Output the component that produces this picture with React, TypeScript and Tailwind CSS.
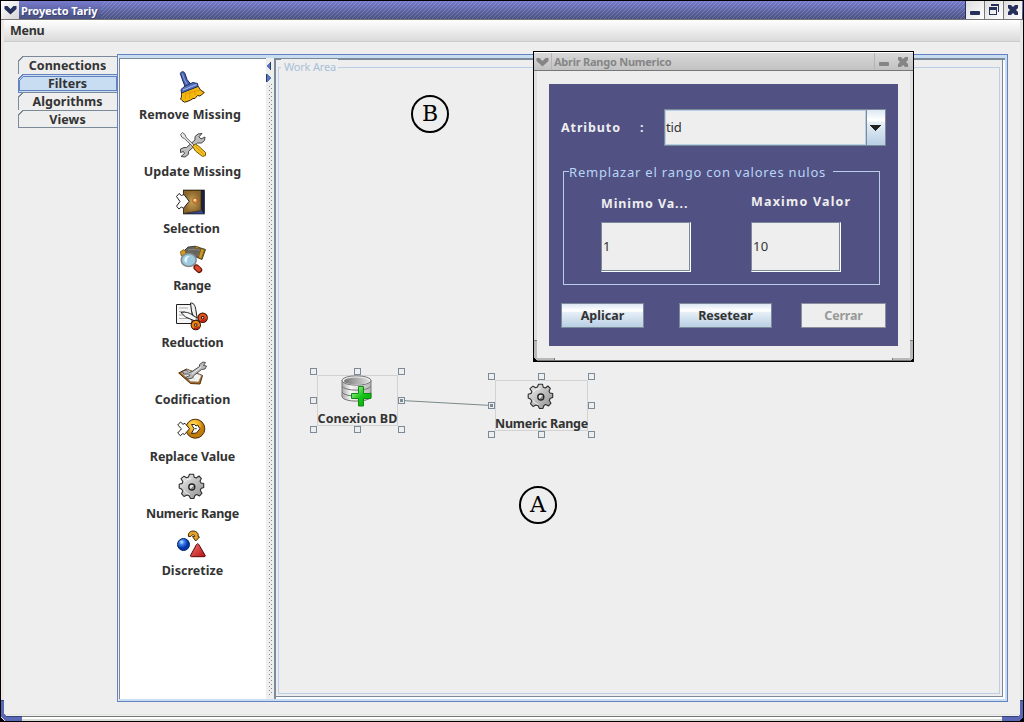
import type { ReactNode } from 'react';

function IconFrame({ children }: { children: ReactNode }) {
  return (
    <svg width="32" height="32" viewBox="0 0 32 32" className="block shrink-0 overflow-visible" strokeLinejoin="round">
      {children}
    </svg>
  );
}

function BrushIcon() {
  return (
    <IconFrame>
      <path d="M4.3 1.5C5-.8 8-.9 8.9 1.300L11 7.500 14.800 12.200 9.300 15 6.500 8Z" fill="#4763b4" stroke="#1c2856" />
      <path d="M6.300 1.500 8.500 8 11.500 13" fill="none" stroke="#8fa6e2" />
      <path d="M5.500 20.500C5.500 23 6 25 4.500 27L6 28.500 8.500 30.200 11 29.500 14.500 28.200 17 26.500 19 26.500 21.500 23.500 24 24 28.300 20.500 24.500 18 22 14Z" fill="#f5b80e" stroke="#3a2805" />
      <path d="M10 21 9 27M14 19 13.500 26M18 18 19.500 23M9 22 24 18" stroke="#d8940a" strokeWidth=".8" fill="none" />
      <path d="M5 17.500 9 14 17 10.500 21.500 11.500 22 14.500 5.500 21Z" fill="#5570bd" stroke="#1f2c60" />
      <path d="M7 18 20.500 12.500" stroke="#a9bbe8" fill="none" />
    </IconFrame>
  );
}

function ToolsIcon() {
  return (
    <IconFrame>
      <path d="M4.500 20 8 18.500 10.500 18.500 19 11 19 7.500 22 5 26 4.500 23 7.800 25 10 29 8 28.500 11.500 25.500 14 21.500 14 12.500 22.500 12.300 25.500 9 28 5 27.500 8.500 24.500 7.500 22.500 4.500 23.500Z" fill="#bdbdbd" stroke="#444" />
      <path d="M4.500 5.500 6.500 3.600 9 5.500 10 8.300 18 16 16.600 17.500 8.300 9.500 6 8.500Z" fill="#e6e6e6" stroke="#444" strokeWidth=".8" />
      <path d="M16.500 17.500 19.300 15 22.500 17 29.500 23.500V26.500L26.500 27.500 19.500 22Z" fill="#f4c022" stroke="#76560a" />
      <path d="M19.500 17.500 27.500 25" stroke="#d09a10" />
    </IconFrame>
  );
}

function DoorIcon() {
  return (
    <IconFrame>
      <defs>
        <radialGradient id="door-wood"><stop stopColor="#c8a055" /><stop offset="1" stopColor="#8a652b" /></radialGradient>
      </defs>
      <path d="M7 3.700H28.700V28.300H7Z" fill="#111019" />
      <path d="M9 27.500 25 23 28 27.700Z" fill="#35478d" />
      <path d="M25.500 5V23L28.500 27V5Z" fill="#1b2143" />
      <path d="M7.500 4.500H25V24.500L7.500 27.500Z" fill="url(#door-wood)" stroke="#49330f" strokeWidth=".8" />
      <circle cx="19.300" cy="14.700" r="2.700" fill="#e08a3c" stroke="#80410f" strokeWidth=".5" />
      <circle cx="18.700" cy="14" r="1.200" fill="#ffe3c0" />
      <path d="M.5 10.500 3 7.500 5.500 9.500 8 8.500 13.200 15.300 7.500 22.200 5.300 21 3 23 .5 20.200 4 15.500Z" fill="#fff" stroke="#222" />
    </IconFrame>
  );
}

function MagnifierIcon() {
  return (
    <IconFrame>
      <path d="M8 8 12 4 19 3.200 29.500 6.500 27.500 12 26 16.500 20 14 8 12Z" fill="#66645f" stroke="#292620" strokeWidth=".8" />
      <path d="M12 7 21 6 25 8 22 13" fill="none" stroke="#8d8a83" />
      <path d="M25 5.500 28.500 6.500 25.500 16 22.500 14.500ZM4.500 8.500 8 6.500 10 9 9 14 5 12.500ZM20 3.500 23 4.500 22 6 19 5Z" fill="#cf9a1e" stroke="#6b4b0a" strokeWidth=".7" />
      <path d="M18 22 22 26" stroke="#777" strokeWidth="2.500" />
      <path d="M20.500 24.500 23.200 27" stroke="#64150a" strokeWidth="6" strokeLinecap="round" />
      <path d="M20.700 24.500 23 26.700" stroke="#df4828" strokeWidth="4" strokeLinecap="round" />
      <ellipse cx="12.700" cy="17" rx="7.500" ry="6.500" fill="#9ccbe1" stroke="#888" strokeWidth="1.600" />
      <path d="M8.500 18C8 14.500 10.500 12.500 14 13 11 14.500 10.500 17 11 20Z" fill="#e8f7fb" />
    </IconFrame>
  );
}

function ScissorsIcon() {
  return (
    <IconFrame>
      <path d="M.5 4.500H16V23.500H.5Z" fill="#f6f6f6" stroke="#222" />
      <path d="M3 8H12M3 11.500H9M3 15H11M3 18.500H13" stroke="#aaa" />
      <path d="M14.500 3C18.500 2.500 19.500 7 20 11L21.500 20 18.500 20 15.500 11Z" fill="#eee" stroke="#222" />
      <path d="M5 12.500C10 11.500 14 13 17 15.500L24 19.500 19 21 9.500 17Z" fill="#f8f8f8" stroke="#222" />
      <circle cx="26.700" cy="17.700" r="3" fill="none" stroke="#321006" strokeWidth="4.400" />
      <circle cx="26.700" cy="17.700" r="3" fill="none" stroke="#e7521a" strokeWidth="2.500" />
      <circle cx="19.800" cy="25" r="3" fill="none" stroke="#321006" strokeWidth="4.400" />
      <circle cx="19.800" cy="25" r="3" fill="none" stroke="#ed8312" strokeWidth="2.500" />
      <path d="M18 28A3.500 3.500 0 0 0 22.800 26.500M25 20.500A3.500 3.500 0 0 0 29.800 19" fill="none" stroke="#c61710" strokeWidth="1.500" />
      <circle cx="21" cy="19" r="1" fill="#fff" stroke="#333" strokeWidth=".6" />
    </IconFrame>
  );
}

function NoteWrenchIcon() {
  return (
    <IconFrame>
      <path d="M2.700 16 10.500 12 26.500 18.500 24 27 14.500 26.500Z" fill="#a7651c" stroke="#573009" />
      <path d="M5.500 16 11 12.500 25.500 18.500 22.500 25 14.500 24.500Z" fill="#f3f2ef" stroke="#8a8a86" strokeWidth=".6" />
      <path d="M9 17 14 22M12 16 19 22.500" stroke="#c7c7c3" />
      <path d="M6.500 14 10.500 13 13 15.500 16 14.500 23.500 9.500 23.500 7.500 27 5 29.500 5.500 27.500 8.500 30.500 9 29 12 25.500 12.500 17.500 18.800 16.500 21 12 22 9.500 20.500 14 18.500 12.500 17 7.500 17Z" fill="#b9bab9" stroke="#444" strokeWidth=".9" />
      <path d="M16 17 25 10" stroke="#eee" />
    </IconFrame>
  );
}

function ReplaceIcon() {
  return (
    <IconFrame>
      <defs>
        <radialGradient id="gold-disc" cx=".4" cy=".3"><stop stopColor="#ffe16b" /><stop offset=".6" stopColor="#f3b224" /><stop offset="1" stopColor="#c07b0c" /></radialGradient>
      </defs>
      <g transform="translate(0 -6)">
        <circle cx="19.300" cy="20.700" r="9.500" fill="url(#gold-disc)" stroke="#4b2d05" />
        <path d="M1.700 17 4.500 14 7 16.300 9 15.300 13.500 20.800 8.500 26.500 6.700 25.500 4.500 27.700 1.700 25 5.500 20.800Z" fill="#fff" stroke="#222" />
        <path d="M15.500 16.500 18.500 16.500 20 18 21.500 17 24 20.700 20.500 25 15.500 25.500 18 20.700Z" fill="#fff" stroke="#2c2410" />
        <path d="M18.700 20.700H20.700" stroke="#333" />
      </g>
    </IconFrame>
  );
}

function GearIcon() {
  return (
    <IconFrame>
      <defs>
        <linearGradient id="gear-metal" x2="1" y2="1"><stop stopColor="#f0f0f0" /><stop offset="1" stopColor="#8d8d8d" /></linearGradient>
      </defs>
      <path d="M13.500 3.200H17.500L18.200 6.200 20.300 7 22.900 5 25.300 7.400 24 10.200 25 12 27.700 12.500V16.500L25 17.600 24.300 19.500 26 22.200 23.600 25 20.700 23.500 19 24.500 17.800 27.500H14.500L13 24.800 11 24 8 25.500 5.500 22.700 6.800 20 5.500 18 3.200 17V13.200L6.200 12.400 6.800 10.500 5 7.700 8 5.200 10.600 6.700 12.400 6Z" fill="url(#gear-metal)" stroke="#2d2d2d" strokeWidth="1.100" />
      <path d="M8 11 11 8.500 15 7.500M8 19 10 22 13.500 23.500" stroke="#fff" fill="none" opacity=".7" />
      <circle cx="15.800" cy="16" r="3" fill="#e5e5e5" stroke="#222" strokeWidth="1.400" />
      <path d="M14.500 18 17.800 14.500V17L16 18.200Z" fill="#777" />
    </IconFrame>
  );
}

function ShapesIcon() {
  return (
    <IconFrame>
      <defs>
        <radialGradient id="sphere" cx=".35" cy=".3"><stop stopColor="#d9ecff" /><stop offset=".4" stopColor="#3f88ef" /><stop offset="1" stopColor="#0434ab" /></radialGradient>
        <linearGradient id="cone" x2="1" y2="1"><stop stopColor="#ee7770" /><stop offset="1" stopColor="#b90f14" /></linearGradient>
      </defs>
      <path d="M12.500 8.500C11.500 4 16 2 19.500 3.500 22 4.500 22.500 6.500 22 8.500L23.500 9 19.700 13 16.500 8.500 18.800 8.300C18.500 6.500 16.500 6 14.700 8.500Z" fill="#e6a227" stroke="#3d2707" />
      <circle cx="7.500" cy="16.500" r="6" fill="url(#sphere)" stroke="#06245f" />
      <path d="M20.500 16.500Q21.500 14.800 22.800 16.500L29.200 27.500Q29.500 28.700 28.200 28.700H15.500Q14 28.500 14.600 27.300Z" fill="url(#cone)" stroke="#5a0708" />
    </IconFrame>
  );
}

function DatabaseIcon() {
  return (
    <svg width="32" height="32" viewBox="0 0 32 32" className="-mt-px block overflow-visible">
      <defs>
        <linearGradient id="db-side"><stop stopColor="#aaa" /><stop offset=".3" stopColor="#f7f7f7" /><stop offset="1" stopColor="#b5b5b5" /></linearGradient>
        <linearGradient id="db-top"><stop stopColor="#777" /><stop offset="1" stopColor="#ddd" /></linearGradient>
        <linearGradient id="plus" x2="1" y2="1"><stop stopColor="#c9f5b9" /><stop offset=".5" stopColor="#16c716" /><stop offset="1" stopColor="#08a508" /></linearGradient>
      </defs>
      <path d="M1 5V22C3 27.500 28 27.500 30 22V5Z" fill="url(#db-side)" stroke="#777" />
      <path d="M1 11C3 16.500 28 16.500 30 11M1 17C3 22.500 28 22.500 30 17" fill="none" stroke="#777" />
      <ellipse cx="15.500" cy="5.500" rx="14.500" ry="4.700" fill="#eee" stroke="#777" />
      <ellipse cx="15.500" cy="6" rx="12.500" ry="3.600" fill="url(#db-top)" />
      <path d="M17.500 11.500H22.500V18.500H30V23.500H22.500V31H17.500V23.500H10.500V18.500H17.500Z" fill="url(#plus)" stroke="#118c11" />
    </svg>
  );
}

function Chevron() {
  return (
    <svg width="13" height="10" viewBox="0 0 13 10" className="block">
      <path d="M.5 1H3.500L6.500 4 9.500 1H12.500V4L6.500 9.500 .5 4Z" fill="currentColor" />
    </svg>
  );
}

function Minimize() {
  return <span className="block h-1 w-[10px] rounded-[1px] bg-current" />;
}

function Close() {
  return (
    <svg width="12" height="12" viewBox="0 0 12 12">
      <path d="M1 1H4L6 3 8 1H11V4L9 6 11 8V11H8L6 9 4 11H1V8L3 6 1 4Z" fill="currentColor" />
    </svg>
  );
}

function Restore() {
  return (
    <svg width="12" height="12" viewBox="0 0 12 12" shapeRendering="crispEdges">
      <path d="M3 0H11V8H10V2H3ZM1 3H9V11H1ZM2 6V10H8V6Z" fill="currentColor" fillRule="evenodd" />
    </svg>
  );
}

const tabs = [
  { name: 'Connections', tracking: 'tracking-[0px]' },
  { name: 'Filters', tracking: 'tracking-[0px]' },
  { name: 'Algorithms', tracking: 'tracking-[0.05px]' },
  { name: 'Views', tracking: 'tracking-[0.1px]' },
];

function Tabs() {
  return (
    <nav className="mt-[14px] ml-[14px] flex h-[72px] w-[99px] shrink-0 flex-col">
      {tabs.map(({ name, tracking }, i) => {
        const active = i === 1;
        return (
          <div key={name} className="relative flex h-[18px] items-center justify-center">
            <svg width="99" height="19" className="absolute top-0 left-0 overflow-visible" shapeRendering="crispEdges">
              {active ? (
                <>
                  <path d="M.5 18.500V5L5 .5H99V18H.5Z" fill="#c8ddf2" stroke="#6382bf" />
                  <path d="M1.500 16.500V6.500L5.500 2.500H98.500V16.500Z" fill="#c8ddf2" stroke="#6382bf" />
                </>
              ) : (
                <path d="M.5 18V5L5 .5H99" fill="none" stroke="#7a8a99" />
              )}
              {i === 3 && <path d="M0 17.500H99" stroke="#7a8a99" />}
            </svg>
            <span className={`relative pt-[2px] leading-[18px] ${tracking}`}>{name}</span>
          </div>
        );
      })}
    </nav>
  );
}

const filters = [
  { name: 'Remove Missing', Icon: BrushIcon, label: '-ml-[4px] tracking-[0.07px]' },
  { name: 'Update Missing', Icon: ToolsIcon, label: 'ml-px tracking-[0.05px]' },
  { name: 'Selection', Icon: DoorIcon, label: '-ml-px tracking-[-0.05px]' },
  { name: 'Range', Icon: MagnifierIcon, label: 'tracking-[-0.3px]' },
  { name: 'Reduction', Icon: ScissorsIcon, label: 'ml-px tracking-[-0.15px]' },
  { name: 'Codification', Icon: NoteWrenchIcon, label: 'ml-px tracking-[0.05px]' },
  { name: 'Replace Value', Icon: ReplaceIcon, label: 'ml-px tracking-[-0.1px]' },
  { name: 'Numeric Range', Icon: GearIcon, label: 'ml-px tracking-[-0.25px]' },
  { name: 'Discretize', Icon: ShapesIcon, label: 'ml-px tracking-[0.05px]' },
];

function FilterList() {
  return (
    <div className="flex w-[147px] shrink-0 flex-col items-center border-t border-l border-[#7a8a99] bg-white pt-[13px]">
      {filters.map(({ name, Icon, label }) => (
        <div key={name} className="flex h-[57px] w-full flex-col items-center pr-[2px]">
          <Icon />
          <span className={`mt-[3px] leading-4 whitespace-nowrap ${label}`}>{name}</span>
        </div>
      ))}
    </div>
  );
}

function Divider() {
  return (
    <svg width="8" height="641" className="block shrink-0" shapeRendering="crispEdges">
      <defs>
        <pattern id="bumps" width="4" height="4" patternUnits="userSpaceOnUse" x="3" y="0">
          <path d="M0 0H1V1H0ZM2 2H3V3H2Z" fill="#7a8a99" />
        </pattern>
      </defs>
      <rect width="8" height="641" fill="#eee" />
      <rect x="3" y="26" width="4" height="611" fill="url(#bumps)" />
      <path d="M4 4V12L0 8Z" fill="#5577c0" />
      <path d="M4.500 4V12" stroke="#333a55" />
      <path d="M1 16V24L5 20Z" fill="#5577c0" />
      <path d="M.5 16V24" stroke="#333a55" />
    </svg>
  );
}

function Handle({ className, linked }: { className: string; linked?: boolean }) {
  return (
    <span className={`absolute flex size-[7px] items-center justify-center border border-[#7a8a99] bg-[#eee] ${className}`}>
      {linked && <span className="size-[3px] bg-[#7a8a99]" />}
    </span>
  );
}

function Node({ className, children, linked }: { className: string; children: ReactNode; linked: 'left' | 'right' }) {
  return (
    <div className={`absolute h-[65px] px-[7px] pt-[7px] ${className}`}>
      <Handle className="top-0 left-0" />
      <Handle className="top-0 left-[calc(50%-3.500px)]" />
      <Handle className="top-0 right-0" />
      <Handle className="top-[29px] left-0" linked={linked === 'left'} />
      <Handle className="top-[29px] right-0" linked={linked === 'right'} />
      <Handle className="bottom-0 left-0" />
      <Handle className="bottom-0 left-[calc(50%-3.500px)]" />
      <Handle className="right-0 bottom-0" />
      <div className="flex h-[51px] flex-col items-center border border-[#d2d2d2]">{children}</div>
    </div>
  );
}

function Marker({ className, children }: { className: string; children: ReactNode }) {
  return (
    <div className={`absolute flex size-[38px] items-center justify-center rounded-full border-2 border-black font-['DejaVu_Serif',serif] text-[22px] leading-none font-normal text-black ${className}`}>
      {children}
    </div>
  );
}

function WorkArea() {
  return (
    <section className="relative min-w-0 flex-1 border-t-2 border-l-2 border-[#7a8a99] bg-[#eee]">
      <div className="h-full border-r-2 border-b-2 border-white">
        <div className="h-full border-r border-b border-[#7a8a99] pt-[7px] pr-[2px] pb-[2px] pl-[2px]">
          <div className="h-full border border-[#b8cfe5]">
            <h2 className="-mt-[9px] ml-[2px] w-[57px] bg-[#eee] pl-[3px] text-[11px] leading-4 font-normal tracking-[-0.2px] whitespace-nowrap text-[#a9c0d8]">Work Area</h2>
          </div>
        </div>
      </div>
      <svg width="400" height="200" className="absolute top-[300px] left-[100px]">
        <path d="M25.500 40.500 115.500 45.500" stroke="#7a8a8a" />
      </svg>
      <Node className="top-[308px] left-[34px] w-[95px]" linked="right">
        <div className="pr-[2px]"><DatabaseIcon /></div>
        <span className="mt-[4px] leading-4 tracking-[0.1px] whitespace-nowrap">Conexion BD</span>
      </Node>
      <Node className="top-[313px] left-[212px] w-[107px]" linked="left">
        <div className="pr-[2px]"><GearIcon /></div>
        <span className="mt-[3px] leading-4 tracking-[-0.250px] whitespace-nowrap">Numeric Range</span>
      </Node>
      <Marker className="top-[35px] left-[135px]">B</Marker>
      <Marker className="top-[426px] left-[243px]">A</Marker>
    </section>
  );
}

function ValueField({ label, value, labelClass }: { label: string; value: string; labelClass: string }) {
  return (
    <label className="flex w-[102px] flex-col">
      <span className={`h-5 leading-5 whitespace-nowrap text-[#eee] ${labelClass}`}>{label}</span>
      <span className="flex h-[50px] w-[90px] items-center border border-[#7a8a99] border-r-white border-b-white bg-[#eee] font-normal">
        <span className="flex size-full items-center border-r border-b border-[#7a8a99] pb-[2px] pl-[1px] text-[13px] tracking-[0.2px]">{value}</span>
      </span>
    </label>
  );
}

const metal = 'bg-[linear-gradient(#dde8f3_0%,#fff_28%,#fff_32%,#e8f0f7_34%,#b8cfe5_100%)]';

function RangeDialog() {
  return (
    <div className="absolute top-[50px] left-[532px] flex h-[311px] w-[381px] flex-col border border-black bg-[#eee]">
      <header className="flex h-[19px] shrink-0 items-center border-t border-b border-t-white border-b-[#777] bg-[linear-gradient(#d8d8d8,#c2c2c2)] text-[#858585]">
        <span className="flex h-full w-[18px] items-center justify-center border-r border-[#b5b5b5]"><Chevron /></span>
        <span className="ml-[2px] text-[11px] leading-4 tracking-[-0.25px]">Abrir Rango Numerico</span>
        <span className="ml-auto flex h-full w-[39px] items-center gap-[8px] border-l border-[#b5b5b5] pl-1">
          <span className="mt-[5px]"><Minimize /></span>
          <Close />
        </span>
      </header>
      <div className="flex min-h-0 flex-1 flex-col border-x-[3px] border-b border-[#e0e0e0] border-b-[#777] px-3 pt-[13px]">
        <div className="flex h-[262px] w-[349px] flex-col bg-[#525184] px-3 pt-[25px]">
          <div className="flex h-[37px] w-[325px] items-center text-[#eee]">
            <span className="w-[79px] tracking-[0.9px]">Atributo</span>
            <span className="w-6">:</span>
            <div className="flex h-[37px] w-[222px] border border-[#7a8a99] bg-[#eee] text-[#333]">
              <span className="flex flex-1 items-center border border-[#b8cfe5] pb-[2px] text-[13px] font-normal tracking-[-0.1px]">tid</span>
              <span className={`flex w-[19px] items-center justify-center border-l border-[#7a8a99] pr-px ${metal}`}>
                <svg width="11" height="6" shapeRendering="crispEdges"><path d="M0 0H11L5.500 6Z" fill="#222" /></svg>
              </span>
            </div>
          </div>
          <fieldset className="relative mt-[25px] ml-[2px] flex h-[114px] w-[317px] gap-12 border border-[#b8cfe5] pt-[20px] pl-[37px]">
            <span className="absolute -top-[9px] left-[5px] w-[264px] bg-[#525184] text-[13px] leading-[18px] font-normal tracking-[0.8px] whitespace-nowrap text-[#b8d6f5]">Remplazar el rango con valores nulos</span>
            <ValueField label="Minimo Va..." value="1" labelClass="mt-[2px] mb-[8px] tracking-[0.9px]" />
            <ValueField label="Maximo Valor" value="10" labelClass="mb-[10px] tracking-[1.2px]" />
          </fieldset>
          <div className="mt-[18px] flex h-[25px] w-[325px] justify-between">
            <button className={`w-[83px] border border-[#7a8a99] ${metal}`}>Aplicar</button>
            <button className={`mr-[-6px] w-[93px] border border-[#7a8a99] tracking-[-0.1px] ${metal}`}>Resetear</button>
            <button className="w-[85px] border border-[#8d8d9b] bg-[#eee] tracking-[-0.2px] text-[#999]">Cerrar</button>
          </div>
        </div>
      </div>
      <svg width="379" height="22" className="pointer-events-none absolute bottom-0 left-0" shapeRendering="crispEdges">
        <path d="M0 2H3V19H21V21H2L0 19ZM379 2H376V19H358V21H377L379 19Z" fill="#b9b9b9" />
        <path d="M0 1.500H3M376 1.500H379M3 21.500H376M20.500 19V21M358.500 19V21" stroke="#777" />
        <path d="M0 19 3 22H0ZM379 19 376 22H379Z" fill="#000" />
      </svg>
    </div>
  );
}

function TitleBar() {
  return (
    <header className="flex h-[19px] shrink-0 border-b border-[#777] bg-[linear-gradient(#767bcd,#485080)] pr-px text-[#26305c]">
      <span className="flex w-[18px] items-center justify-center bg-[linear-gradient(135deg,#fff,#d5d5d5)]"><Chevron /></span>
      <h1 className="ml-[2px] text-[11px] leading-[20px] tracking-[-0.1px] text-white [text-shadow:1px_1px_0_#3b4276]">Proyecto Tariy</h1>
      <div className="ml-1 flex-1 bg-[repeating-linear-gradient(135deg,#ffffff30_0px,#ffffff30_1px,transparent_1px,transparent_2.830px)]" />
      <div className="flex gap-px border-l border-[#26305c] bg-[#777]">
        <span className="flex w-[18px] items-center justify-center bg-[linear-gradient(135deg,#ddd,#fff)] pt-[6px]"><Minimize /></span>
        <span className="flex w-[18px] items-center justify-center bg-[linear-gradient(135deg,#ddd,#fff)]"><Restore /></span>
        <span className="flex w-[18px] items-center justify-center bg-[linear-gradient(135deg,#ddd,#fff)]"><Close /></span>
      </div>
    </header>
  );
}

function WindowFoot() {
  return (
    <svg width="1022" height="23" viewBox="1 0 1022 23" className="pointer-events-none absolute -bottom-px left-0" shapeRendering="crispEdges">
      <path d="M5 15.500H1020" stroke="#e2e5e0" />
      <path d="M4 17.500H1020" stroke="#777" />
      <path d="M4 19H1020" stroke="#fff" strokeWidth="2" />
      <path d="M4 21H1020" stroke="#d9ddd8" strokeWidth="2" />
      <path d="M1 1H4V15L6 17H22V22H5L1 18Z" fill="#5967b5" />
      <path d="M1 1.500H4M6 17.500H22" stroke="#34417b" />
      <path d="M1023 1H1020V15L1018 17H1002V22H1019L1023 18Z" fill="#5967b5" />
      <path d="M1020 1.500H1023M1002 17.500H1018" stroke="#34417b" />
      <path d="M1 22.500H1023" stroke="#000" />
      <path d="M1 18 5 23H1ZM1023 18 1019 23H1023Z" fill="#000" />
    </svg>
  );
}

export default function App() {
  return (
    <div className="relative flex h-[722px] w-[1024px] flex-col overflow-hidden border border-black bg-[#eee] font-['Noto_Sans',sans-serif] text-[12.5px] leading-4 font-bold text-[#333]">
      <TitleBar />
      <div className="flex min-h-0 flex-1 flex-col border-x-[3px] border-[#e6e6e6] border-l-[#eee5e5]">
        <div className="flex h-[22px] shrink-0 items-center border-b border-[#ccc] bg-[linear-gradient(#fff,#dadada)] pl-[6px] tracking-[-0.3px]">Menu</div>
        <div className="flex min-h-0 flex-1">
          <Tabs />
          <main className="mt-3 flex h-[648px] w-[891px] shrink-0 border border-[#6382bf] bg-[#c8ddf2] pt-[3px] pr-[2px] pb-[2px] pl-px shadow-[inset_1px_0_#eee]">
            <FilterList />
            <Divider />
            <WorkArea />
          </main>
        </div>
      </div>
      <WindowFoot />
      <RangeDialog />
    </div>
  );
}
